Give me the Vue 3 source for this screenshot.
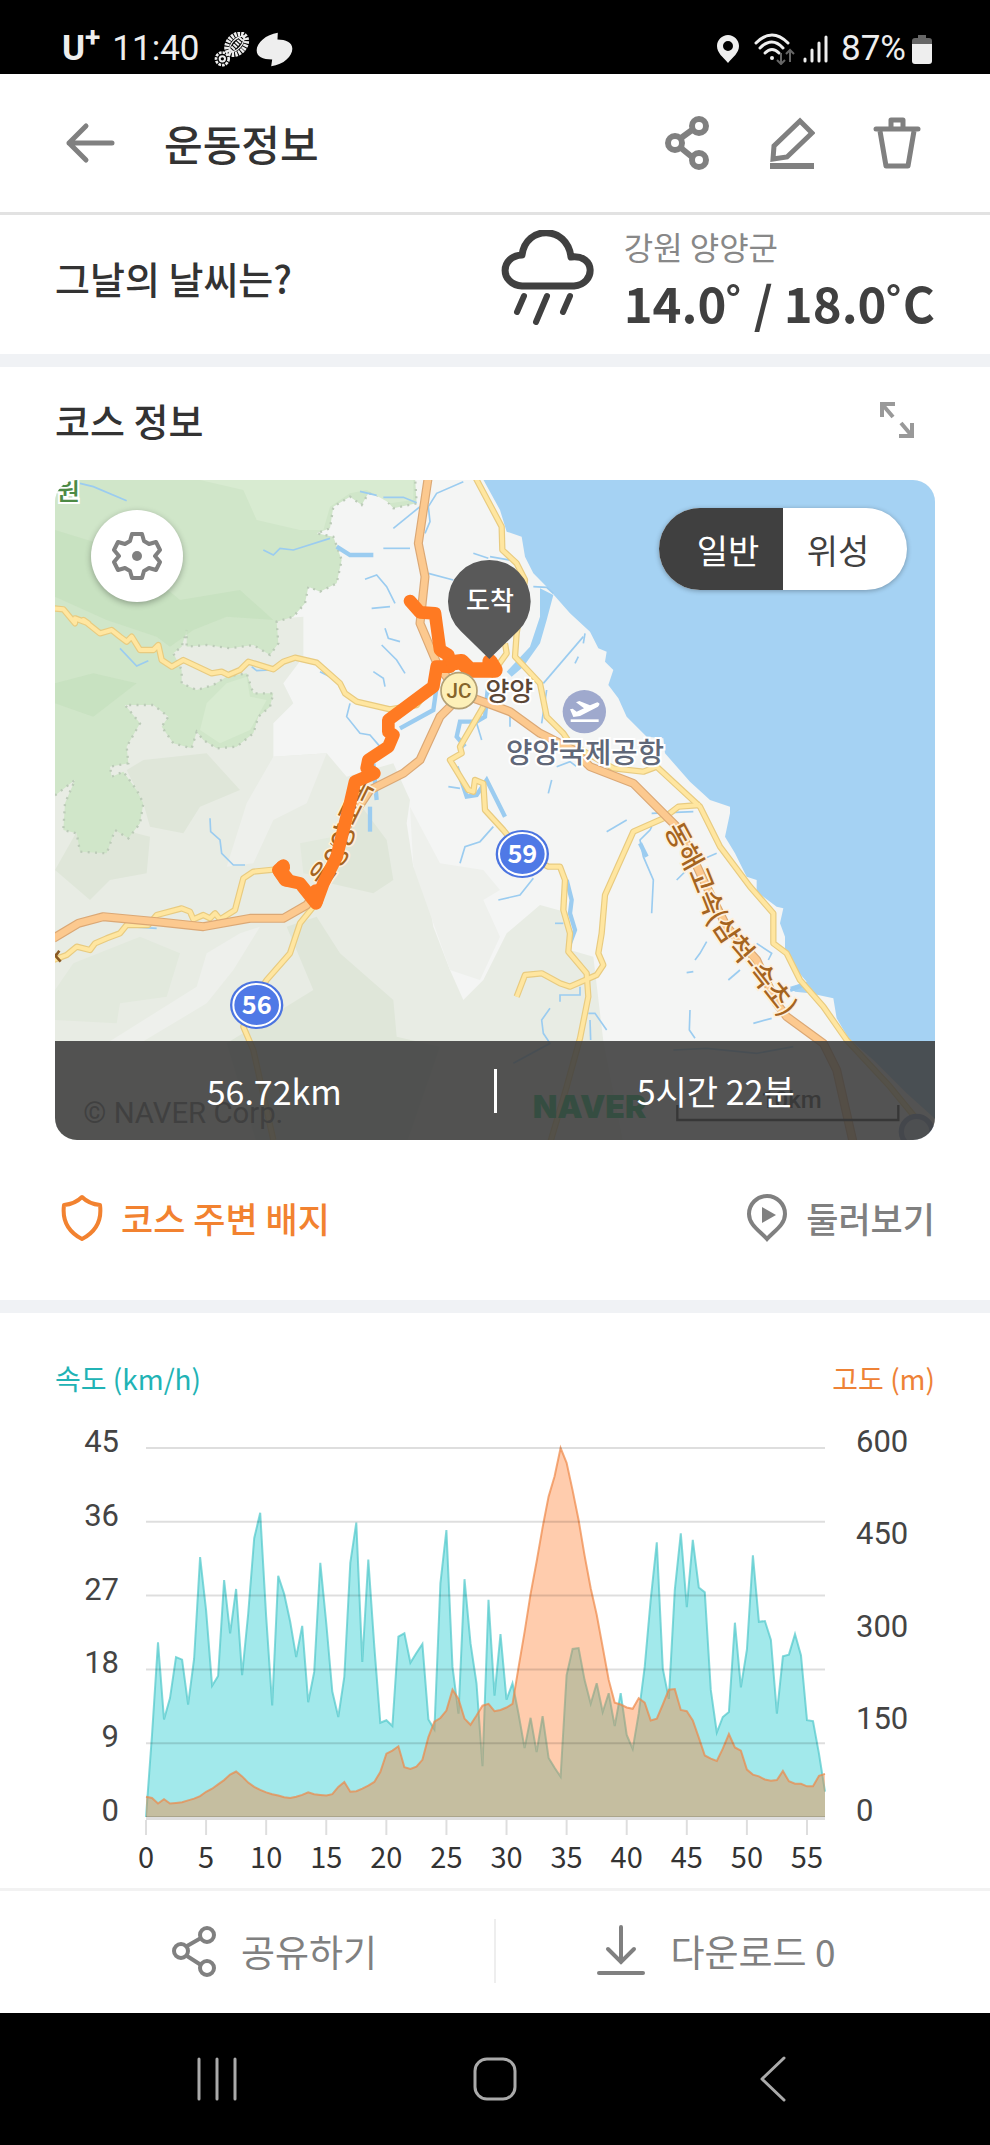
<script setup>
import { ref } from "vue"

  const mapType = ref("normal")

  // one sample every 0.5km
  const speed = [
    0, 10, 21.3, 11.9, 14.5, 19.5, 19.2, 13.7, 19.3, 31.7, 25.2, 16, 17.2, 28.9, 22.4, 27.8, 17.3, 24.8, 34, 37.1,
    24.4, 13.6, 29.4, 27.2, 23.8, 19.5, 23.3, 14, 17.7, 31, 23.6, 15.3, 12.2, 17.1, 31, 35.9, 18.9, 31.4, 20.8, 11.5,
    11.8, 11.1, 22, 22.4, 18.8, 20, 21.1, 11.9, 10.7, 28.5, 35, 18.3, 12.6, 29, 21.2, 16.3, 6.2, 26.5, 14.8, 22.3,
    14.3, 16.3, 12.6, 8.4, 12.1, 7.9, 12.3, 7.2, 6, 4.9, 17.3, 20.5, 20.6, 16.7, 13.8, 16.3, 12.8, 15.1, 11.1, 15.1,
    10, 8.3, 12.6, 18.3, 26.5, 33.5, 18.1, 14.4, 27.7, 34.6, 25.6, 33.8, 28, 27.4, 15.5, 10.3, 12.2, 12.8, 23.7, 15.8,
    20.4, 31.9, 23.8, 23.9, 21.6, 12.6, 19.6, 19.8, 22.3, 19.7, 11.8, 11.7, 7.7, 3.1
  ]
  const altitude = [
    33, 31, 22, 29, 22, 23, 24, 27, 30, 34, 41, 46, 53, 60, 69, 74, 66, 56, 49, 44,
    40, 37, 35, 32, 31, 33, 36, 40, 37, 36, 35, 37, 49, 57, 41, 42, 46, 51, 57, 73,
    103, 108, 115, 81, 78, 82, 93, 130, 155, 161, 173, 207, 192, 160, 150, 165, 181, 184, 172, 174,
    178, 184, 243, 301, 363, 415, 471, 521, 554, 600, 576, 531, 483, 425, 372, 329, 276, 223, 186, 183,
    178, 176, 193, 186, 157, 160, 183, 207, 208, 174, 172, 157, 129, 100, 95, 91, 111, 135, 113, 108,
    77, 69, 66, 61, 59, 60, 75, 58, 54, 54, 50, 50, 67, 70
  ]

  const plot = { left: 91, right: 770, top: 30, bottom: 399 }
  const distance = 56.5

  const xAt = (km) => plot.left + (km / distance) * (plot.right - plot.left)
  const yAt = (value, max) => plot.bottom - (value / max) * (plot.bottom - plot.top)
  const line = (list, max) => list.map((v, i) => `${xAt(i / 2).toFixed(1)},${yAt(v, max).toFixed(1)}`).join(" ")
  const area = (list, max) => `${plot.left},${plot.bottom} ${line(list, max)} ${plot.right},${plot.bottom}`

  const speedTicks = [45, 36, 27, 18, 9, 0]
  const altitudeTicks = [600, 450, 300, 150, 0]
  const kmTicks = [0, 5, 10, 15, 20, 25, 30, 35, 40, 45, 50, 55]

  // map geometry, shared by the casing and the fill of each road
  const highways = [
    "M1165 20 1135 220 1155 320 1140 460 1195 590 1260 670 1370 710 1410 725 1500 790 1600 840 1650 890 1780 940 1870 1030 1920 1080 1990 1230 2060 1370 2150 1470 2210 1600 2240 1640 2350 1720 2390 1800 2440 2020",
    "M1240 700 1200 740 1140 870 1090 910 990 960 930 1050 850 1240 800 1305 730 1345 630 1345 490 1370 350 1355 190 1340 115 1360 40 1405"
  ]
  const roads = [
    "M40 415 70 418 105 460 105 445 145 460 130 450 180 490 215 480 240 500 260 515 275 500 300 540 340 540 355 525 365 570 395 590 430 570 515 610 545 605 565 615 600 600 625 575 700 598 730 575 765 563 830 578 900 640 915 670 950 695 1050 718 1130 705 1180 640",
    "M710 1198 640 1205 610 1225 585 1320 540 1348 525 1330 510 1345 490 1335 460 1348 450 1325 425 1315 350 1335 325 1365 260 1365 240 1390 200 1405 165 1420 150 1440 110 1430 80 1455 40 1470",
    "M820 1310 780 1360 750 1450 680 1530 640 1590 610 1670 640 1740 700 2010",
    "M1305 20 1385 170 1387 240 1430 280 1455 330 1430 490 1425 560 1500 640 1520 740 1570 790 1590 820 1720 895 1810 905 1850 890 1980 1010 2040 1130 2130 1250 2200 1330 2200 1420 2240 1450 2280 1530 2350 1610 2420 1710 2550 1850 2640 1960",
    "M1980 1005 1915 1010 1870 1045 1780 1085 1695 1275 1685 1390 1675 1450 1690 1485 1670 1515 1590 1550 1560 1540 1505 1510 1455 1515 1430 1580",
    "M1330 710 1260 830 1265 850 1230 870 1285 960 1300 965 1305 930 1330 940 1335 1020 1390 1080 1447 1150 1525 1190 1560 1190 1575 1230 1570 1320 1590 1390 1585 1445 1640 1510 1645 1580 1620 1705 1580 1850 1530 2020",
    "M1350 620 1400 550 1395 520"
  ]
  const streams = [
    "M120 40 160 50 260 92", "M670 240 700 255 720 235 760 240 870 205", "M1270 35 1190 70 1165 110 1170 155 1155 190", "M1060 175 1140 110",
    "M1030 82 1090 82 1130 98", "M960 64 1010 76", "M975 328 1010 315 1040 350 1065 400", "M995 415 1050 410", "M1165 310 1240 330",
    "M1300 250 1345 265", "M1035 475 1045 505 1080 515", "M1025 525 1070 570 1095 610", "M1000 605 1030 625 1035 650", "M1030 235 1110 235",
    "M635 590 650 602 690 600", "M240 535 290 588 325 572", "M840 605 900 635", "M930 700 920 740 960 790 990 795 1020 830",
    "M1310 760 1325 810", "M1225 950 1260 955", "M510 1045 512 1085 540 1110 545 1150 580 1185 615 1185", "M270 1370 350 1375",
    "M1360 1070 1320 1115 1275 1130 1260 1180", "M1700 1085 1760 1050", "M1630 500 1510 640", "M1635 490 1630 520", "M1605 580 1615 560",
    "M1520 660 1505 760", "M1410 740 1410 770", "M1550 890 1590 875 1610 890", "M1535 930 1525 970", "M1350 260 1420 272",
    "M1480 350 1520 352 1540 370", "M1835 1030 1960 1025", "M1835 1070 1830 1080 1800 1110 1810 1160 1840 1230 1835 1330", "M2030 1150 1960 1180 1910 1230",
    "M2000 1415 1980 1450 1965 1470", "M1940 1508 1960 1505", "M2100 1500 2065 1530", "M2150 1420 2195 1450 2185 1470", "M2195 1645 2140 1660",
    "M1950 1620 1948 1680 1965 1705", "M1480 1225 1440 1275 1375 1290", "M1620 1550 1620 1575 1560 1575 1560 1595", "M1645 1630 1665 1630 1700 1680",
    "M1650 1650 1652 1710", "M1530 1615 1505 1650 1510 1690 1530 1720 1420 1780", "M1900 1740 2000 1735 2150 1750 2260 1730",
    "M1545 1360 1570 1360"
  ]
  const rivers = [
    "M890 230 930 255 1000 255", "M1190 650 1180 720 1080 775", "M1345 640 1335 740 1310 755 1260 755 1250 800 1275 830", "M1250 890 1280 980 1310 975 1340 930 1370 990 1395 1040",
    "M1000 880 1010 990", "M990 1010 990 1085", "M1580 1230 1595 1290 1590 1330 1605 1380 1590 1420", "M1800 1120 1820 1160", "M2250 1560 2290 1545"
  ]
  const woods = "M40 20 1125 20 1130 100 1060 115 1030 80 985 70 965 105 930 80 880 110 870 175 830 190 880 200 905 270 890 340 840 365 805 350 795 400 760 440 710 455 715 520 690 555 640 525 570 535 500 525 440 530 440 480 425 530 400 550 425 600 425 640 470 660 520 645 560 620 620 610 640 670 700 670 690 710 655 740 640 790 590 830 530 835 490 810 470 785 455 835 400 820 365 770 385 740 340 705 255 705 300 760 260 830 265 880 210 890 215 920 250 905 290 960 310 1000 300 1060 265 1105 225 1080 200 1150 120 1145 110 1090 70 1080 75 1000 105 930 40 980Z"
  const roadBadges = [
    { no: 59, x: 1447, y: 1152 },
    { no: 56, x: 650, y: 1605 }
  ]
</script>

<template>
  <div class="screen">
    <div class="status">
      <span class="status__carrier">U<sup>+</sup></span>
      <span class="status__time">11:40</span>
      <svg class="status__tire" viewBox="0 0 108 104" width="36" height="35" aria-hidden="true">
        <g transform="rotate(42 68 36)" fill="none" stroke="#eee">
          <ellipse cx="68" cy="36" rx="25" ry="35" stroke-width="15" stroke-dasharray="7 3" />
          <path d="M68 2C50 22 50 50 68 70M68 2C86 22 86 50 68 70" stroke-width="4" />
          <path d="M68 4V68" stroke-width="14" stroke-dasharray="6 3" />
        </g>
        <circle cx="25" cy="80" r="19" fill="none" stroke="#eee" stroke-width="8" stroke-dasharray="8 3" />
        <circle cx="25" cy="80" r="8" fill="none" stroke="#eee" stroke-width="6" />
      </svg>
      <svg viewBox="0 0 112 104" width="37" height="35" aria-hidden="true">
        <path fill="#eee" d="M66 1 65 22C90 22 110 30 110 50 110 72 85 98 46 103L49 82C20 82 2 74 2 54 2 32 30 6 66 1Z" />
      </svg>
      <span class="status__space"></span>
      <svg viewBox="0 0 24 30" width="24" height="30" aria-hidden="true">
        <path fill="#eee" fill-rule="evenodd" d="M12 1C6 1 1 6 1 12c0 7 6 11 11 17 5-6 11-10 11-17C23 6 18 1 12 1Zm0 6a5 5 0 1 1 0 10 5 5 0 0 1 0-10Z" />
      </svg>
      <svg class="status__wifi" viewBox="0 0 42 32" width="42" height="32" aria-hidden="true">
        <g fill="none" stroke="#eee" stroke-width="3" stroke-linecap="round">
          <path d="M2 10Q18-6 34 10" /><path d="M6 15Q18 3 29 15" /><path d="M11 20Q18 13 25 20" />
        </g>
        <circle cx="18" cy="25" r="2" fill="#eee" />
        <path d="M27 20V30M23 27l4 4 4-4M36 29V18M32 21l4-4 4 4" fill="none" stroke="#666" stroke-width="2" />
      </svg>
      <svg viewBox="0 0 26 28" width="26" height="28" aria-hidden="true">
        <path d="M2 24v2M9 15v11M16 8v18M23 2v24" stroke="#eee" stroke-width="3" stroke-linecap="round" />
      </svg>
      <span class="status__battery">87%</span>
      <svg viewBox="0 0 20 29" width="20" height="29" aria-hidden="true">
        <path fill="#666" d="M6 0h8v3h3q3 0 3 3v3H0V6q0-3 3-3h3Z" />
        <path fill="#eee" d="M0 9h20v17q0 3-3 3H3q-3 0-3-3Z" />
      </svg>
    </div>

    <header class="header">
      <button class="icon-button icon-button--back" aria-label="뒤로">
        <svg viewBox="0 0 50 42" width="50" height="42" fill="none" stroke="#808080" stroke-width="5" stroke-linecap="round" stroke-linejoin="round">
          <path d="M47 21H4M21 4 4 21l17 17" />
        </svg>
      </button>
      <h1 class="header__title">운동정보</h1>
      <button class="icon-button" aria-label="공유">
        <svg viewBox="0 0 44 56" width="44" height="56" fill="none" stroke="#808080" stroke-width="6">
          <path d="M16 23 27 15M16 33l11 9" />
          <circle cx="10" cy="28" r="7" /><circle cx="34" cy="11" r="7" /><circle cx="34" cy="45" r="7" />
        </svg>
      </button>
      <button class="icon-button" aria-label="편집">
        <svg viewBox="0 0 46 54" width="46" height="54" fill="none" stroke="#808080" stroke-width="5">
          <path d="M31 5 43 17 18 41 4 43 5 30Z" /><path d="M1 50H45" stroke-width="6" />
        </svg>
      </button>
      <button class="icon-button" aria-label="삭제">
        <svg viewBox="0 0 48 54" width="48" height="54" fill="none" stroke="#808080" stroke-width="5" stroke-linejoin="round">
          <path d="M3 13H45" stroke-linecap="round" /><path d="M18 12V4H30V12" /><path d="M7 15 13 50H35L41 15" />
        </svg>
      </button>
    </header>

    <section class="weather">
      <h2 class="title">그날의 날씨는?</h2>
      <svg class="weather__icon" viewBox="0 0 94 96" width="94" height="96" fill="none" stroke="#404040" stroke-linecap="round" aria-hidden="true">
        <path stroke-width="7" stroke-linejoin="round" d="M22 56H74C96 54 96 24 71 27 67-5 26-5 22 25 0 26-1 54 22 56Z" />
        <path stroke-width="6" d="M24 66 17 82M47 66 36 92M70 66 63 82" />
      </svg>
      <div>
        <p class="weather__region">강원 양양군</p>
        <p class="weather__temp">14.0˚ / 18.0˚C</p>
      </div>
    </section>

    <section class="course">
      <div class="course__head">
        <h2 class="title">코스 정보</h2>
        <button class="icon-button" aria-label="지도 확대">
          <svg viewBox="0 0 36 38" width="36" height="38" fill="none" stroke="#999" stroke-width="4">
            <path d="M3 16V3H16M3 3 14 16M33 22V35H20M33 35 22 22" />
          </svg>
        </button>
      </div>

      <div class="map">
        <svg class="map__canvas" viewBox="45 30 2640 1980" role="img" aria-label="코스 지도">
          <rect x="45" y="30" width="2640" height="1980" fill="#f4f5f4" />
          <path fill="#e8ece4" d="M40 500 790 440 790 560 730 640 760 700 700 760 700 860 860 850 920 920 1060 880 1110 990 1100 1060 1120 1190 1160 1250 1180 1370 1230 1500 1270 1590 1330 1530 1400 1390 1500 1305 1590 1330 1590 1440 1660 1460 1690 1713 1750 2020 40 2020Z" />
          <path fill="#eef0ec" d="M700 860 860 850 800 1000 700 1050 640 1180 560 1190 620 1000ZM1110 1010 1200 1180 1330 1200 1380 1260 1330 1290 1380 1400 1320 1530 1230 1500 1120 1190ZM470 1550 500 1450 600 1390 660 1370 580 1500 500 1600 300 1720 200 1720Z" />
          <path fill="#dfe6d9" d="M310 870 500 850 600 960 480 1010 430 1090 330 1070 310 1000 260 900ZM950 990 1040 1110 1060 1230 1000 1270 870 1240 930 1100ZM740 1370 830 1340 900 1450 1060 1590 1070 1700 1200 1730 1100 2020 650 2020 560 1720 820 1560ZM130 1050 330 1100 320 1210 210 1230 150 1290 45 1200Z" />
          <path fill="#e2e9dd" d="M100 1480 300 1400 420 1450 380 1580 240 1600 230 1660 45 1650 45 1560ZM780 1120 880 1100 850 1220 790 1210Z" />
          <path :d="woods" fill="#d0e6c9" stroke="#bccbb8" stroke-width="7" stroke-dasharray="6 16" />
          <path fill="#d8ebd1" d="M480 30 1120 30 1120 90 1050 100 980 60 930 70 870 110 850 180 780 180 650 150 610 60ZM560 640 620 620 630 680 680 690 630 780 540 820 480 780 500 700Z" />
          <path fill="#c5dfbd" d="M45 180 240 240 420 390 600 360 700 450 560 440 460 480 390 530 350 500 200 450 45 380ZM45 640 160 610 290 640 160 740 45 700Z" opacity=".7" />
          <path fill="#a5d2f3" d="M1325 20 1380 120 1400 185 1445 200 1455 260 1480 310 1520 350 1590 430 1650 485 1675 535 1700 545 1695 575 1720 600 1705 645 1735 685 1760 740 1820 800 1870 805 1875 850 1950 935 2010 990 2070 1010 2070 1030 2055 1100 2085 1150 2120 1220 2150 1230 2150 1265 2210 1310 2230 1315 2220 1360 2235 1400 2235 1440 2270 1500 2300 1535 2250 1550 2265 1565 2310 1570 2380 1585 2390 1645 2425 1705 2500 1770 2600 1870 2700 1960 2700 20Z" />
          <path fill="#a0d0f2" d="M1500 355 1540 375 1520 450 1500 520 1450 590 1415 620 1400 605 1470 530 1500 440Z" />
          <g fill="none" stroke="#9bccf0">
            <path v-for="d in streams" :key="d" :d="d" stroke-width="5" />
            <path v-for="d in rivers" :key="d" :d="d" stroke-width="13" />
          </g>
          <g fill="none" stroke-linejoin="round">
            <path v-for="d in roads" :key="d" :d="d" stroke="#e8cb80" stroke-width="19" />
            <path v-for="d in roads" :key="d" :d="d" stroke="#ffe6a0" stroke-width="12" />
            <path v-for="d in highways" :key="d" :d="d" stroke="#dba875" stroke-width="27" />
            <path v-for="d in highways" :key="d" :d="d" stroke="#fcc98f" stroke-width="20" />
          </g>

          <path id="road-west" d="M850 1255 920 1160 955 1040 1010 930" fill="none" />
          <text class="map__road" font-size="76"><textPath href="#road-west">울양양고속</textPath></text>
          <path id="road-east" d="M1872 1078 1950 1220 2000 1345 2050 1420 2110 1490 2220 1630 2280 1710" fill="none" />
          <text class="map__road" font-size="80"><textPath href="#road-east">동해고속(삼척-속초)</textPath></text>

          <g fill="none" stroke="#ff7a22" stroke-linejoin="round" stroke-linecap="round">
            <path stroke-width="38" d="M1110 393 1140 427 1185 430 1200 540 1225 555 1230 590 1190 590 1180 650 1045 750 1045 785 1060 795 1045 830 985 870 980 895 1003 910 945 935 930 1000 915 1060 890 1160 850 1240 828 1300 780 1240 735 1230 715 1200 730 1187" />
            <path stroke-width="46" d="M1240 578 1265 575 1290 600 1365 600 1350 575" />
            <path stroke-width="44" d="M728 1192 722 1205 740 1228M828 1290V1265" />
          </g>

          <path fill="#595959" d="M1348 567 1262 483A124 124 0 1 1 1434 483Z" />
          <text x="1350" y="420" font-size="78" fill="#fff" text-anchor="middle" font-weight="500">도착</text>

          <circle cx="1257" cy="662" r="54" fill="#fdf0b8" stroke="#b3a074" stroke-width="5" />
          <text x="1257" y="684" class="map__jc">JC</text>
          <text x="1408" y="692" font-size="78" class="map__place" fill="#5b4636">양양</text>

          <circle cx="1633" cy="725" r="65" fill="#9fa9cd" />
          <path d="M1600 741 1590 718 1598 716 1610 725 1632 715 1608 697 1618 693 1650 706 1672 697Q1684 700 1674 710L1620 738Z" fill="#fff" />
          <path d="M1592 752H1676" stroke="#fff" stroke-width="8" />
          <text x="1635" y="880" font-size="86" class="map__place" fill="#606778">양양국제공항</text>

          <g v-for="badge in roadBadges" :key="badge.no">
            <ellipse :cx="badge.x" :cy="badge.y" rx="80" ry="72" fill="#4b74e0" />
            <ellipse :cx="badge.x" :cy="badge.y" rx="70" ry="63" fill="#4f79e6" stroke="#fff" stroke-width="6" />
            <text :x="badge.x" :y="badge.y + 28" class="map__badge">{{ badge.no }}</text>
          </g>
          <text x="84" y="90" font-size="80" class="map__place" fill="#4d8a45">원</text>
          <path d="M40 1450 62 1475M45 1460 58 1442" stroke="#8a5a24" stroke-width="8" />

          <text x="130" y="1960" font-size="88" font-family="Roboto, sans-serif" fill="#5a5a5a">© NAVER Corp.</text>
          <text x="1478" y="1945" font-size="96" font-family="Inter, sans-serif" font-weight="900" fill="#00c060">NAVER</text>
          <text x="2345" y="1915" font-size="72" font-family="Roboto, sans-serif" font-weight="500" text-anchor="end" fill="#222">10km</text>
          <path d="M1912 1905V1950H2575V1905" fill="none" stroke="#111" stroke-width="7" />
          <circle cx="2630" cy="1985" r="46" fill="#c4d0e0" stroke="#7f92bd" stroke-width="16" />
        </svg>

        <button class="map__settings" aria-label="지도 설정">
          <svg viewBox="0 0 50 50" width="50" height="50" fill="none" stroke="#808080" stroke-width="4" stroke-linejoin="round">
            <path d="M20 3h10l2 7 5 3 7-2 4 8-5 6 5 6-4 8-7-2-5 3-2 7H20l-2-7-5-3-7 2-4-8 5-6-5-6 4-8 7 2 5-3Z" />
            <circle cx="25" cy="25" r="5" fill="#808080" stroke="none" />
          </svg>
        </button>

        <div class="map__switch">
          <button class="map__type" :class="{ 'map__type--active': mapType === 'normal' }" :aria-pressed="mapType === 'normal'" v-on:click="mapType = 'normal'">일반</button>
          <button class="map__type" :class="{ 'map__type--active': mapType === 'satellite' }" :aria-pressed="mapType === 'satellite'" v-on:click="mapType = 'satellite'">위성</button>
        </div>

        <div class="map__summary">
          <span class="map__stat">56.72km</span>
          <span class="map__stat">5시간 22분</span>
        </div>
      </div>

      <div class="course__links">
        <button class="link link--badge">
          <svg viewBox="0 0 42 48" width="42" height="48" fill="none" stroke="#f28230" stroke-width="4" stroke-linejoin="round" aria-hidden="true">
            <path d="M21 3Q28 10 39 11 42 34 21 45 0 34 3 11 14 10 21 3Z" />
          </svg>
          코스 주변 배지
        </button>
        <button class="link">
          <svg viewBox="0 0 42 50" width="42" height="50" aria-hidden="true">
            <path d="M21 3A18 18 0 0 0 3 21C3 32 14 38 21 46 28 38 39 32 39 21A18 18 0 0 0 21 3Z" fill="none" stroke="#808080" stroke-width="4" />
            <path d="M16 14 30 22 16 30Z" fill="#808080" />
          </svg>
          둘러보기
        </button>
      </div>
    </section>

    <section class="graph">
      <div class="graph__legend">
        <span class="graph__speed">속도 (km/h)</span>
        <span class="graph__altitude">고도 (m)</span>
      </div>
      <svg class="graph__canvas" viewBox="0 0 880 470" role="img" aria-label="속도와 고도 그래프">
        <polygon :points="area(speed, 45)" fill="rgba(70, 211, 216, 0.5)" />
        <polyline :points="line(speed, 45)" fill="none" stroke="#50c8cb" stroke-opacity="0.7" stroke-width="2" />
        <polygon :points="area(altitude, 600)" fill="rgba(255, 122, 40, 0.38)" />
        <polyline :points="line(altitude, 600)" fill="none" stroke="#ee8747" stroke-opacity="0.7" stroke-width="2" />
        <g stroke="#000" stroke-opacity="0.13" stroke-width="2">
          <line v-for="tick in speedTicks" :key="tick" :x1="plot.left" :x2="plot.right" :y1="yAt(tick, 45)" :y2="yAt(tick, 45)" />
          <line :x1="plot.left" :x2="plot.right" :y1="plot.bottom + 2" :y2="plot.bottom + 2" />
          <line v-for="km in kmTicks" :key="km" :x1="xAt(km)" :x2="xAt(km)" :y1="plot.bottom + 3" :y2="plot.bottom + 18" />
        </g>
        <g class="graph__y">
          <text v-for="tick in speedTicks" :key="tick" x="64" :y="yAt(tick, 45) + 4" text-anchor="end">{{ tick }}</text>
          <text v-for="tick in altitudeTicks" :key="tick" x="801" :y="yAt(tick, 600) + 4">{{ tick }}</text>
        </g>
        <g class="graph__x">
          <text v-for="km in kmTicks" :key="km" :x="xAt(km)" y="450">{{ km }}</text>
        </g>
      </svg>
    </section>

    <footer class="actions">
      <button class="actions__item">
        <svg viewBox="0 0 44 52" width="44" height="52" fill="none" stroke="#808080" stroke-width="4" aria-hidden="true">
          <path d="M15 21 29 13M15 31l14 9" />
          <circle cx="9" cy="26" r="7" /><circle cx="35" cy="10" r="7" /><circle cx="35" cy="43" r="7" />
        </svg>
        공유하기
      </button>
      <button class="actions__item">
        <svg viewBox="0 0 50 52" width="50" height="52" fill="none" stroke="#808080" stroke-width="4" stroke-linecap="round" aria-hidden="true">
          <path d="M25 2V37M12 24 25 37 38 24" /><path d="M3 48H47" />
        </svg>
        다운로드 0
      </button>
    </footer>

    <nav class="nav">
      <button class="nav__item" aria-label="최근 앱">
        <svg viewBox="0 0 42 44" width="42" height="44" stroke="#aaa" stroke-width="3" stroke-linecap="round"><path d="M3 2V42M21 2V42M39 2V42" /></svg>
      </button>
      <button class="nav__item" aria-label="홈">
        <svg viewBox="0 0 46 46" width="46" height="46" fill="none" stroke="#aaa" stroke-width="3"><rect x="3" y="3" width="40" height="40" rx="12" /></svg>
      </button>
      <button class="nav__item" aria-label="뒤로 가기">
        <svg viewBox="0 0 28 46" width="28" height="46" fill="none" stroke="#aaa" stroke-width="3" stroke-linecap="round" stroke-linejoin="round"><path d="M25 2 3 23 25 44" /></svg>
      </button>
    </nav>
  </div>
</template>

<style>
  body {
    margin: 0;
    background: #ffffff;
  }
</style>

<style scoped>
  .screen {
    color: #333333;
    font-family: "Noto Sans CJK KR", sans-serif;
    background: #ffffff;
  }

  button {
    padding: 0;
    border: 0;
    color: inherit;
    font: inherit;
    background: none;
    cursor: pointer;
  }

  svg {
    display: block;
    flex-shrink: 0;
  }

  h1, h2, p {
    margin: 0;
  }

  .status {
    display: flex;
    align-items: center;
    box-sizing: border-box;
    height: 74px;
    padding: 24px 58px 0 62px;
    color: #eeeeee;
    font-family: Roboto, sans-serif;
    font-size: 35px;
    line-height: 40px;
    background: #000000;
  }

  .status__carrier {
    font-weight: 700;
  }

  .status__carrier sup {
    font-size: 28px;
    line-height: 0;
  }

  .status__time {
    margin-left: 12px;
  }

  .status__tire {
    margin: 0 6px 0 14px;
  }

  .status__space {
    flex: 1;
  }

  .status__wifi {
    margin: 0 7px 0 14px;
  }

  .status__battery {
    margin: 0 6px 0 12px;
  }

  .header {
    display: flex;
    align-items: center;
    gap: 49px;
    box-sizing: border-box;
    height: 141px;
    padding: 0 65px;
    border-bottom: 3px solid #e2e2e2;
  }

  .icon-button {
    display: flex;
    justify-content: center;
    align-items: center;
    width: 56px;
    height: 56px;
  }

  .icon-button--back {
    width: 50px;
  }

  .header__title {
    flex: 1;
    font-size: 42px;
    font-weight: 500;
    line-height: 56px;
  }

  .title {
    flex: 1;
    font-size: 38px;
    font-weight: 500;
    line-height: 48px;
  }

  .weather {
    display: flex;
    align-items: center;
    height: 126px;
    padding: 0 55px 13px;
    border-bottom: 13px solid #f0f2f5;
  }

  .weather__icon {
    margin-right: 30px;
  }

  .weather__region {
    color: #888888;
    font-size: 32px;
    line-height: 48px;
  }

  .weather__temp {
    color: #404040;
    font-size: 49px;
    font-weight: 700;
    line-height: 64px;
  }

  .course {
    padding: 0 55px;
    border-bottom: 13px solid #f0f2f5;
  }

  .course__head {
    display: flex;
    align-items: center;
    height: 105px;
    padding: 0 10px 8px 0;
  }

  .map {
    position: relative;
    border-radius: 22px;
    overflow: hidden;
  }

  .map__canvas {
    width: 100%;
    height: auto;
  }

  .map__road {
    fill: #a5641f;
    stroke: #fff0da;
    stroke-width: 10px;
    paint-order: stroke;
    font-weight: 500;
  }

  .map__place {
    stroke: #ffffff;
    stroke-width: 12px;
    paint-order: stroke;
    font-weight: 500;
    text-anchor: middle;
  }

  .map__jc {
    fill: #86652a;
    font-family: Roboto, sans-serif;
    font-size: 62px;
    font-weight: 500;
    text-anchor: middle;
  }

  .map__badge {
    fill: #ffffff;
    font-size: 76px;
    font-weight: 700;
    text-anchor: middle;
  }

  .map__settings {
    position: absolute;
    top: 30px;
    left: 36px;
    display: flex;
    justify-content: center;
    align-items: center;
    width: 92px;
    height: 92px;
    border-radius: 50%;
    background: #ffffff;
    box-shadow: 0 2px 6px rgba(0, 0, 0, 0.3);
  }

  .map__switch {
    position: absolute;
    top: 28px;
    right: 28px;
    display: flex;
    border-radius: 41px;
    background: #ffffff;
    box-shadow: 0 1px 5px rgba(0, 0, 0, 0.3);
    overflow: hidden;
  }

  .map__type {
    width: 124px;
    height: 82px;
    padding-right: 14px;
    color: #404040;
    font-size: 34px;
  }

  .map__type:first-child {
    padding: 0 0 0 14px;
  }

  .map__type--active {
    color: #ffffff;
    background: #404040;
  }

  .map__summary {
    position: absolute;
    right: 0;
    bottom: 0;
    left: 0;
    display: flex;
    align-items: center;
    height: 99px;
    color: #ffffff;
    font-size: 34px;
    line-height: 44px;
    background: rgba(60, 60, 60, 0.88);
  }

  .map__stat {
    flex: 1;
    text-align: center;
  }

  .map__stat + .map__stat {
    border-left: 3px solid #ffffff;
  }

  .course__links {
    display: flex;
    justify-content: space-between;
    align-items: center;
    height: 156px;
    padding-bottom: 4px;
  }

  .link {
    display: flex;
    align-items: center;
    gap: 18px;
    color: #808080;
    font-size: 35px;
    font-weight: 500;
    line-height: 50px;
  }

  .link--badge {
    padding-left: 6px;
    color: #f28230;
  }

  .graph {
    padding: 45px 55px 0;
  }

  .graph__legend {
    display: flex;
    justify-content: space-between;
    font-size: 28px;
    line-height: 40px;
  }

  .graph__speed {
    color: #21b3b5;
  }

  .graph__altitude {
    color: #ee8236;
  }

  .graph__canvas {
    width: 100%;
    height: auto;
    margin-top: 20px;
  }

  .graph__y {
    fill: #444444;
    font-family: Roboto, sans-serif;
    font-size: 31px;
  }

  .graph__x {
    fill: #333333;
    font-size: 29px;
    text-anchor: middle;
  }

  .actions {
    display: flex;
    align-items: center;
    box-sizing: border-box;
    height: 125px;
    padding: 0 55px 2px;
    border-top: 3px solid #f2f2f2;
  }

  .actions__item {
    display: flex;
    flex: 1;
    justify-content: center;
    align-items: center;
    gap: 25px;
    height: 64px;
    color: #808080;
    font-size: 37px;
  }

  .actions__item + .actions__item {
    border-left: 2px solid #eeeeee;
  }

  .nav {
    display: flex;
    height: 132px;
    padding: 0 78px;
    background: #000000;
  }

  .nav__item {
    display: flex;
    flex: 1;
    justify-content: center;
    align-items: center;
  }
</style>
